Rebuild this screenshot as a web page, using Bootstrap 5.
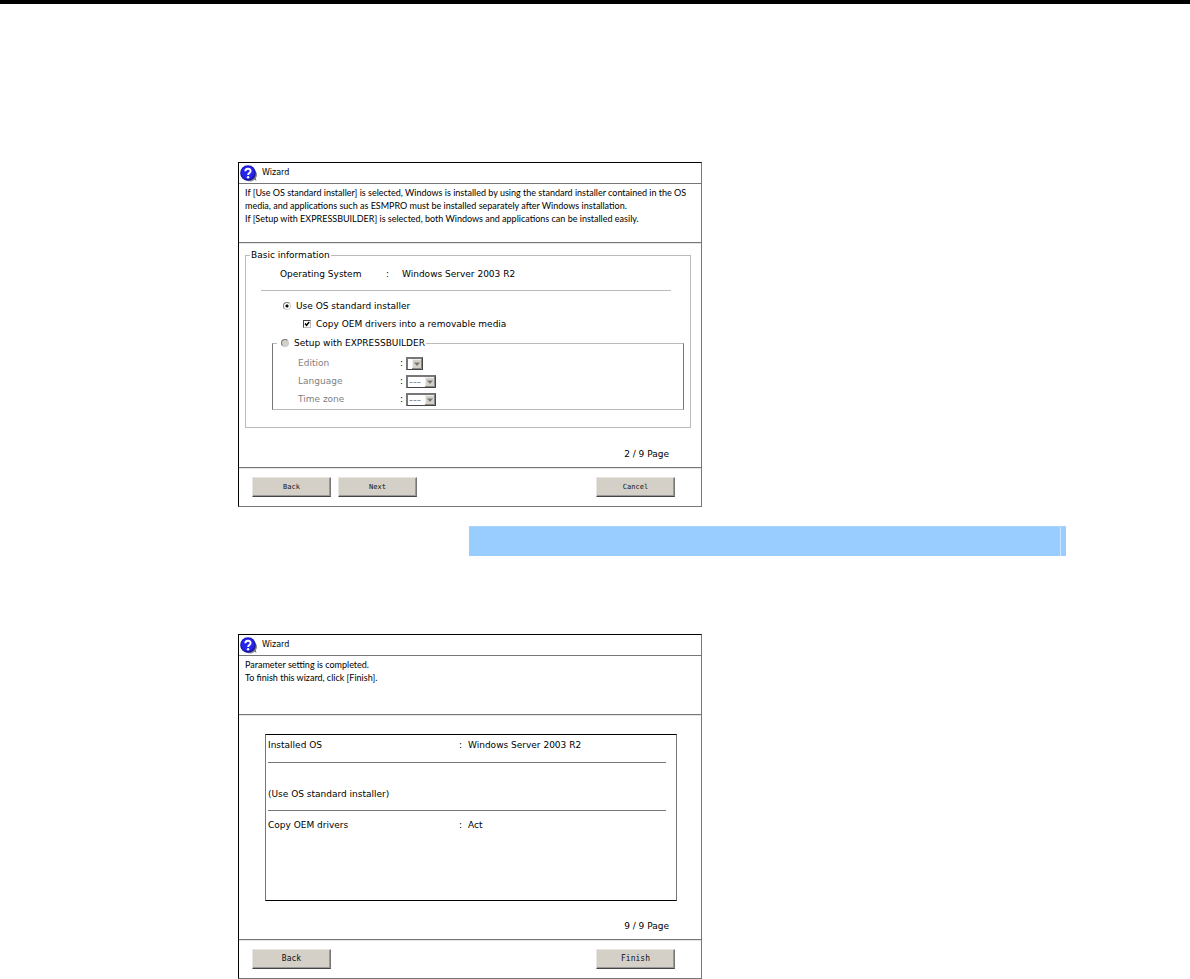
<!DOCTYPE html>
<html lang="en">
<head>
<meta charset="utf-8">
<meta name="viewport" content="width=device-width, initial-scale=1">
<title>Wizard</title>
<link href="https://cdn.jsdelivr.net/npm/bootstrap@5.3.0/dist/css/bootstrap.min.css" rel="stylesheet">
<style>
body{font-family:"DejaVu Sans",sans-serif;font-size:9px;line-height:16px;color:#000;background:#fff}
.top-rule{height:4px;background:#000}
.sheet{padding:158px 0 0 20%}
.wizard{width:464px;max-width:100%;border:1px solid #000;border-right-color:#777;border-bottom-color:#777}
.wizard-head{height:21px;padding-left:1px;gap:5px;border-bottom:1px solid #777}
.wizard-head h2{font-size:8px;line-height:16px;font-weight:400}
.intro{height:59px;padding:2px 6px;border-bottom:1px solid #777;box-shadow:0 1px #e4e4e4;font-family:Lato,sans-serif;font-size:9px;line-height:13px;color:#000}
.wizard-body{height:224px}
.wizard-foot{height:39px;padding:9px 26px 0 13px;gap:7px;border-top:1px solid #777;box-shadow:inset 0 1px #e4e4e4}
.page-no{padding:0 32px 5px 0}
.group-form{padding:5px 10px 0 6px}
.group-box{border:1px solid #bbb;padding:4px 6px 17px 15px}
.group-box legend{float:none;width:auto;margin:0 0 0 -11px;padding:0 1px;font-size:9px;line-height:14px}
.rule{height:1px;background:#bbb;margin:8px 13px 7px 0}
.os-name{margin-left:19px}
.os-name dt,.os-name dd{font-weight:400;margin:0}
.os-name dt{width:106px}
.os-name .colon{width:16px}
.opt-main{margin-left:22px;gap:5px}
.opt-sub{margin:2px 0 4px 42px;gap:5px}
.sub-box{border:1px solid #bbb;border-left-color:#777;border-right-color:#777;margin-left:11px;padding:4px 0 1px 25px}
.sub-box legend{margin-left:-21px;padding:0 1px 0 4px}
.sub-box legend label{margin-left:5px}
.field-row{height:18px}
.field-row label{width:102px;color:#808080}
.field-row .colon{width:6px}
input.dot,input.tick{appearance:none;flex:none;width:8px;height:8px;margin:0;border:1px solid #777}
input.dot{border-radius:50%;border-right-color:#ccc;border-bottom-color:#ccc}
input.dot:checked{background:radial-gradient(circle,#000 0 1px,#fff 2px)}
input.dot:not(:checked){background:#d4d0c8}
input.tick{border:1px solid #444;border-right-color:#bbb;border-bottom-color:#bbb;background:#fff url("data:image/svg+xml,%3Csvg xmlns='http://www.w3.org/2000/svg' viewBox='0 0 6 6'%3E%3Cpath d='M1 2.5 2.5 4.3 5.2 1' fill='none' stroke='%23000' stroke-width='1.4'/%3E%3C/svg%3E")}
.drop{position:relative;width:30px;height:13px;border:1px solid #555;border-top-width:2px;border-left-width:2px;border-color:#777 #444 #444 #777}
.drop.tiny{width:17px}
.drop select{appearance:none;display:block;width:100%;height:10px;padding:0 0 0 1px;border:0;background:#fff;color:#888;opacity:1;font-size:11px;line-height:10px}
.drop svg{position:absolute;top:0;right:0;width:10px;height:10px;pointer-events:none}
.push{width:79px;height:20px;padding:0;border:1px solid;border-color:#e8e6e0 #777 #444 #e8e6e0;box-shadow:inset -1px -1px #999;background:#d4d0c8;color:#111;font:7px/16px "DejaVu Sans Mono",monospace}
.push.big{font-size:8px}
.note-bar{height:30px;margin:19px 124px 78px 231px;background:#9cf;border-top:1px solid #acd4ff}
.note-bar span{width:6px;border-left:1px solid #cde5ff}
.summary{margin:19px 24px 0 26px;height:167px;padding:2px 10px 0 2px;border:1px solid #000;border-left-color:#777;border-right-color:#777}
.summary th{font-weight:400;width:191px}
.summary table{width:100%}
.summary td,.summary th{padding:0;vertical-align:bottom}
.summary tr{border-bottom:1px solid #777}
.summary tr:last-child{border:0}
.row-a{height:25px}.row-b{height:48px}.row-c{height:23px}
.summary .row-a td,.summary .row-a th{vertical-align:top}
.summary .row-b th{padding-bottom:8px}
.summary .colon{width:9px}
</style>
<script src="https://cdn.jsdelivr.net/npm/bootstrap@5.3.0/dist/js/bootstrap.bundle.min.js"></script>
</head>
<body>
<svg class="d-none" xmlns="http://www.w3.org/2000/svg">
<symbol id="help" viewBox="0 0 17 17"><ellipse cx="10" cy="10" rx="7" ry="6.5" fill="#888"/><path d="M12 13 16.500 16 15 11Z" fill="#777"/><circle cx="8" cy="8" r="7.800" fill="#1515a8"/><circle cx="7.800" cy="7.500" r="6.600" fill="#2525ec"/><path d="M5.300 6.300C5.300 2.900 10.700 2.800 10.600 6.100 10.500 8 8.100 8 8.100 10" fill="none" stroke="#fff" stroke-width="1.900"/><circle cx="8.100" cy="12.300" r="1.200" fill="#fff"/></symbol>
<symbol id="arrow" viewBox="0 0 10 10"><path fill="#d4d0c8" d="M0 0h10v10H0z"/><path d="M.5 10V.5H10" fill="none" stroke="#eee"/><path d="M9.500 0v9.500H0" fill="none" stroke="#888"/><path d="M2 3.500h6L5 7z" fill="#777"/></symbol>
</svg>
<div class="top-rule"></div>
<main class="sheet">
<section class="wizard">
<header class="wizard-head d-flex align-items-center"><svg width="17" height="17" aria-hidden="true"><use href="#help"/></svg><h2 class="m-0">Wizard</h2></header>
<div class="intro">If [Use OS standard installer] is selected, Windows is installed by using the standard installer contained in the OS<br>media, and applications such as ESMPRO must be installed separately after Windows installation.<br>If [Setup with EXPRESSBUILDER] is selected, both Windows and applications can be installed easily.</div>
<div class="wizard-body d-flex flex-column">
<form class="group-form">
<fieldset class="group-box"><legend>Basic information</legend>
<dl class="os-name d-flex mb-0"><dt>Operating System</dt><dd class="colon">:</dd><dd>Windows Server 2003 R2</dd></dl>
<div class="rule"></div>
<div class="opt-main d-flex align-items-center"><input class="dot" type="radio" name="mode" id="standard" checked><label for="standard">Use OS standard installer</label></div>
<div class="opt-sub d-flex align-items-center"><input class="tick" type="checkbox" id="oem" checked><label for="oem">Copy OEM drivers into a removable media</label></div>
<fieldset class="sub-box"><legend class="d-flex align-items-center"><input class="dot" type="radio" name="mode" id="express"><label for="express">Setup with EXPRESSBUILDER</label></legend>
<div class="field-row d-flex align-items-center"><label for="edition">Edition</label><span class="colon">:</span><span class="drop tiny"><select id="edition" disabled><option></option></select><svg aria-hidden="true"><use href="#arrow"/></svg></span></div>
<div class="field-row d-flex align-items-center"><label for="language">Language</label><span class="colon">:</span><span class="drop"><select id="language" disabled><option>---</option></select><svg aria-hidden="true"><use href="#arrow"/></svg></span></div>
<div class="field-row d-flex align-items-center"><label for="zone">Time zone</label><span class="colon">:</span><span class="drop"><select id="zone" disabled><option>---</option></select><svg aria-hidden="true"><use href="#arrow"/></svg></span></div>
</fieldset>
</fieldset>
</form>
<div class="page-no mt-auto text-end">2 / 9 Page</div>
</div>
<footer class="wizard-foot d-flex align-items-start"><button class="push" type="button">Back</button><button class="push" type="button">Next</button><button class="push ms-auto" type="button">Cancel</button></footer>
</section>
<div class="note-bar d-flex justify-content-end"><span></span></div>
<section class="wizard">
<header class="wizard-head d-flex align-items-center"><svg width="17" height="17" aria-hidden="true"><use href="#help"/></svg><h2 class="m-0">Wizard</h2></header>
<div class="intro">Parameter setting is completed.<br>To finish this wizard, click [Finish].</div>
<div class="wizard-body d-flex flex-column">
<div class="summary"><table>
<tr class="row-a"><th scope="row">Installed OS</th><td class="colon">:</td><td>Windows Server 2003 R2</td></tr>
<tr class="row-b"><th scope="row" colspan="3">(Use OS standard installer)</th></tr>
<tr class="row-c"><th scope="row">Copy OEM drivers</th><td class="colon">:</td><td>Act</td></tr>
</table></div>
<div class="page-no mt-auto text-end">9 / 9 Page</div>
</div>
<footer class="wizard-foot d-flex align-items-start"><button class="push big" type="button">Back</button><button class="push big ms-auto" type="button">Finish</button></footer>
</section>
</main>
</body>
</html>
